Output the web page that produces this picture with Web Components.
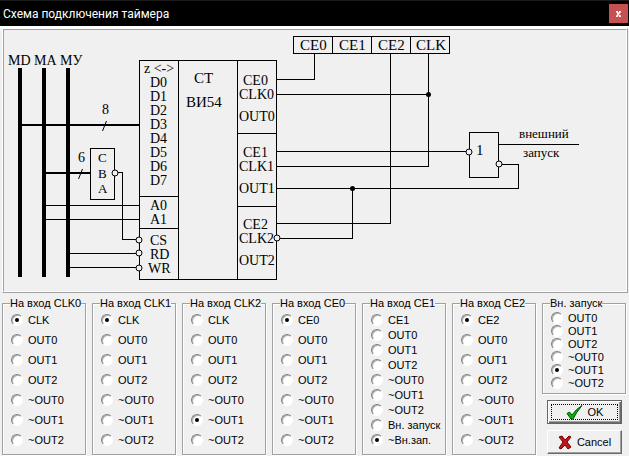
<!DOCTYPE html>
<html lang="ru">
<head>
<meta charset="utf-8">
<title>Схема подключения таймера</title>
<style>
  html, body { margin: 0; background: #f0f0f0; }
</style>
</head>
<body>
<timer-dialog></timer-dialog>
<script>
  const define = (name, html, setup) => {
    const template = document.createElement('template');
    template.innerHTML = html;
    customElements.define(name, class extends HTMLElement {
      constructor() {
        super();
        this.attachShadow({ mode: 'open' }).append(template.content.cloneNode(true));
      }
      connectedCallback() {
        if (setup && !this.ready) { this.ready = true; setup(this, this.shadowRoot); }
      }
    });
  };

  define('title-bar', `
    <style>
      :host { display: flex; align-items: center; justify-content: space-between; height: 26px;
        padding: 0 1px 0 3px; background: #000; color: #fff; box-sizing: border-box;
        border-top: 1px solid #1a1a1a; font: 12px "Roboto", sans-serif; }
      h1 { margin: 0; font: inherit; }
      button { width: 19px; height: 19px; padding: 0; border: 0; background: #c75050; color: #fff; display: grid; place-items: center; }
    </style>
    <h1><slot></slot></h1>
    <button type="button" aria-label="Закрыть"><svg width="5" height="6" viewBox="0 0 5 6"><path d="M.500 .5L4.500 5.500M4.500 .5L.500 5.500M0 .5H2M3 .5H5M0 5.500H2M3 5.500H5" stroke="#fff" stroke-width="1.500"/></svg></button>
  `);

  define('timer-diagram', `
    <style>
      :host { display: block; }
      svg { display: block; width: 100%; height: auto; font-family: "Liberation Serif", serif; font-size: 14px; }
      .wire { fill: none; stroke: #000; stroke-width: 1; shape-rendering: crispEdges; }
      .bus { fill: none; stroke: #000; stroke-width: 4; shape-rendering: crispEdges; }
      .mid { fill: none; stroke: #000; stroke-width: 2; shape-rendering: crispEdges; }
      .inv circle { fill: #f0f0f0; stroke: #000; }
      .large { font-size: 15px; }
      .small { font-size: 13px; }
    </style>
    <svg viewBox="4 30 622 261" role="img" aria-label="Схема">
      <path class="bus" d="M20 68V277M44 68V277M68 68V277"/>
      <path class="mid" d="M20 125H139M44 173H90"/>
      <path class="wire" d="M139.500 60.500H276.500V279.500H139.500ZM178.500 60V279M237.500 60V279M139 196.500H178M139 228.500H178M237 133.500H276M237 206.500H276"/>
      <path class="wire" d="M90.500 148.500H114.500V199.500H90.500ZM44 205.500H139M44 219.500H139M118 172.500H122.500V239.500H136M68 253.500H136M68 267.500H136"/>
      <path class="wire" d="M293.500 36.500H449.500V53.500H293.500ZM332.500 36V53M371.500 36V53M410.500 36V53"/>
      <path class="wire" d="M276 79.500H314.500V53M276 94.500H428M276 151.500H466M276 166.500H428.500V53M276 188.500H518.500V164.500H502M276 223.500H390.500V53M280 238.500H352.500V188"/>
      <path class="wire" d="M469.500 132.500H498.500V177.500H469.500ZM498 144.500H579"/>
      <g fill="#000"><circle cx="428.500" cy="94.500" r="2.500"/><circle cx="352.500" cy="188.500" r="2.500"/></g>
      <g class="inv"><circle cx="115" cy="173" r="3"/><circle cx="139" cy="240" r="3"/><circle cx="139" cy="253" r="3"/><circle cx="139" cy="268" r="3"/><circle cx="277" cy="238" r="3"/><circle cx="469" cy="152" r="3"/><circle cx="499" cy="164" r="3"/></g>
      <path d="M106.500 121L102.500 131M82.500 169L78.500 179" stroke="#000" fill="none"/>
      <g>
        <text x="8" y="65">MD</text><text x="34" y="65">MA</text><text x="60" y="65">МУ</text>
        <text x="102" y="114">8</text><text x="78" y="162">6</text>
        <text x="144" y="73">z &lt;-&gt;</text>
        <text x="150" y="87">D0</text><text x="150" y="101">D1</text><text x="150" y="115">D2</text><text x="150" y="129">D3</text>
        <text x="150" y="143">D4</text><text x="150" y="157">D5</text><text x="150" y="171">D6</text><text x="150" y="185">D7</text>
        <text x="150" y="210">A0</text><text x="150" y="224">A1</text>
        <text x="150" y="245">CS</text><text x="150" y="259">RD</text><text x="148" y="273">WR</text>
        <text x="243" y="85">CE0</text><text x="239" y="99">CLK0</text><text x="239" y="121">OUT0</text>
        <text x="243" y="157">CE1</text><text x="239" y="171">CLK1</text><text x="239" y="193">OUT1</text>
        <text x="243" y="229">CE2</text><text x="239" y="243">CLK2</text><text x="239" y="265">OUT2</text>
      </g>
      <g class="large">
        <text x="194" y="83">СТ</text><text x="186" y="107">ВИ54</text>
        <text x="300" y="50">CE0</text><text x="339" y="50">CE1</text><text x="378" y="50">CE2</text><text x="416" y="50">CLK</text>
        <text x="476" y="155">1</text>
      </g>
      <g class="small">
        <text x="98" y="162">С</text><text x="98" y="178">В</text><text x="98" y="193">А</text>
        <text x="519" y="138">внешний</text><text x="523" y="157">запуск</text>
      </g>
    </svg>
  `);

  define('radio-group', `
    <style>
      :host { display: block; min-width: 0; }
      fieldset { box-sizing: border-box; height: 100%; margin: 0; min-width: 0; padding: 0 0 var(--bottom, 4px) 8px;
        border: 1px solid #a0a0a0; box-shadow: 1px 1px #fff, inset 1px 1px #fff; font: 11px/12px "Liberation Sans", sans-serif; }
      legend { margin-left: -1px; padding: 0; background: #f0f0f0; white-space: nowrap; height: 12px; }
      .list { display: grid; grid-auto-rows: var(--row, 20px); padding-top: var(--top, 1px); }
      label { display: flex; align-items: center; gap: 5px; white-space: nowrap; }
      input { appearance: none; flex: none; width: 12px; height: 12px; margin: 0; border-radius: 50%; box-sizing: border-box;
        border: 1px solid; border-color: #808080 #fff #fff #808080; background: #fff; box-shadow: inset 1px 1px #b0b0b0; display: grid; place-items: center; }
      input:checked::before { content: ""; width: 4px; height: 4px; border-radius: 50%; background: #000; }
    </style>
    <fieldset><legend></legend><div class="list"></div></fieldset>
  `, (host, root) => {
    root.querySelector('legend').textContent = host.getAttribute('caption');
    const list = root.querySelector('.list');
    host.getAttribute('options').split('|').forEach((text, i) => {
      const label = document.createElement('label');
      const input = document.createElement('input');
      input.type = 'radio';
      input.name = 'choice';
      input.checked = i === Number(host.getAttribute('selected'));
      const span = document.createElement('span');
      span.textContent = text;
      label.append(input, span);
      list.append(label);
    });
  });

  define('push-button', `
    <style>
      :host { display: block; }
      button { width: 100%; height: 24px; padding: 0; box-sizing: border-box; display: flex; align-items: center; justify-content: center; gap: 5px;
        background: #f0f0f0; color: #000; border: 1px solid; border-color: #fff #696969 #696969 #fff;
        box-shadow: inset -1px -1px #a0a0a0; font: 11px/14px "Liberation Sans", sans-serif; }
      :host([default]) button { border-color: #646464; box-shadow: inset 1px 1px #fff, inset -1px -1px #696969, inset -2px -2px #a0a0a0; outline: 1px dotted #000; outline-offset: -5px; }
    </style>
    <button type="button"><slot name="icon"></slot><slot></slot></button>
  `);

  define('timer-dialog', `
    <style>
      :host { display: block; }
      main { display: flex; flex-direction: column; padding: 0 1px 1px 2px; border-top: 2px solid #fff; }
      .bevel { border: 1px solid; border-color: #fff #a0a0a0 #a0a0a0 #fff; }
      .inner { border: 1px solid; border-color: #a0a0a0 #fff #fff #a0a0a0; }
      .groups { display: grid; grid-template-columns: repeat(7, minmax(0, 1fr)); gap: 6px; padding: 4px 2px 0 0; }
      .last { display: flex; flex-direction: column; gap: 6px; }
      .last push-button { margin: 0 4px 0 5px; }
      .dense { --row: 15px; --top: 3px; }
      .tight { --row: 13px; --top: 2px; }
    </style>
    <title-bar>Схема подключения таймера</title-bar>
    <main>
      <div class="bevel"><div class="inner"><timer-diagram></timer-diagram></div></div>
      <div class="groups">
        <radio-group caption="На вход CLK0" options="CLK|OUT0|OUT1|OUT2|~OUT0|~OUT1|~OUT2" selected="0"></radio-group>
        <radio-group caption="На вход CLK1" options="CLK|OUT0|OUT1|OUT2|~OUT0|~OUT1|~OUT2" selected="0"></radio-group>
        <radio-group caption="На вход CLK2" options="CLK|OUT0|OUT1|OUT2|~OUT0|~OUT1|~OUT2" selected="5"></radio-group>
        <radio-group caption="На вход CE0" options="CE0|OUT0|OUT1|OUT2|~OUT0|~OUT1|~OUT2" selected="0"></radio-group>
        <radio-group class="dense" caption="На вход CE1" options="CE1|OUT0|OUT1|OUT2|~OUT0|~OUT1|~OUT2|Вн. запуск|~Вн.зап." selected="8"></radio-group>
        <radio-group caption="На вход CE2" options="CE2|OUT0|OUT1|OUT2|~OUT0|~OUT1|~OUT2" selected="0"></radio-group>
        <div class="last">
          <radio-group class="tight" caption="Вн. запуск" options="OUT0|OUT1|OUT2|~OUT0|~OUT1|~OUT2" selected="4"></radio-group>
          <push-button default><svg slot="icon" width="17" height="15" viewBox="0 0 17 15"><path d="M1 8.500L3.500 7L6 10Q10 4 16 .5Q10.500 7 7 14H5Z" fill="#00b010" stroke="#005800"/></svg>OK</push-button>
          <push-button><svg slot="icon" width="14" height="15" viewBox="0 0 14 15"><path d="M1 2L4 1L7 5L11 1L13 2L9 7L13 12L10 14L7 10L3 14L1 13L5 7Z" fill="#c01818" stroke="#700"/></svg>Cancel</push-button>
        </div>
      </div>
    </main>
  `);
</script>
</body>
</html>
